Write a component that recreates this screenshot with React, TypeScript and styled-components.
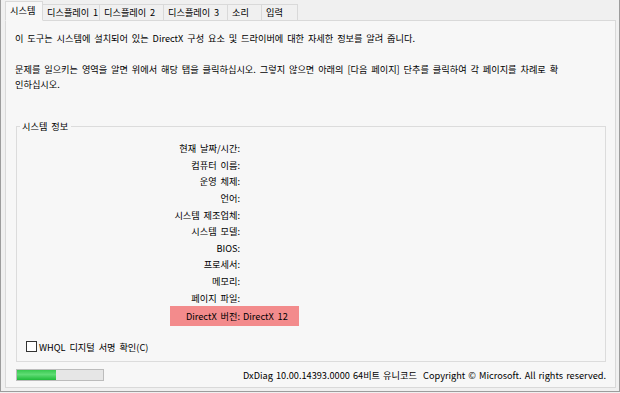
import React from 'react'
import styled, { createGlobalStyle, css } from 'styled-components'

const GlobalStyle = createGlobalStyle`
  html, body {
    margin: 0;
    padding: 0;
    background: #f0f0f0;
  }
  body {
    font-family: 'Noto Sans CJK KR', 'Noto Sans', sans-serif;
    font-size: 9.2px;
    word-spacing: 1.8px;
    color: #000;
    font-feature-settings: 'palt';
  }
`

const tabs = [
  { label: '시스템', width: 38 },
  { label: '디스플레이 1', width: 57 },
  { label: '디스플레이 2', width: 64 },
  { label: '디스플레이 3', width: 64 },
  { label: '소리', width: 34 },
  { label: '입력', width: 36 },
]

const rows = [
  '현재 날짜/시간:',
  '컴퓨터 이름:',
  '운영 체제:',
  '언어:',
  '시스템 제조업체:',
  '시스템 모델:',
  'BIOS:',
  '프로세서:',
  '메모리:',
  '페이지 파일:',
]

const App: React.FC = () => {
  return (
    <>
      <GlobalStyle />
      <Window>
        <TabStrip>
          {tabs.map((t, i) => (
            <Tab key={t.label} $active={i === 0} style={{ width: t.width }}>
              {t.label}
            </Tab>
          ))}
        </TabStrip>
        <Panel>
          <Intro>이 도구는 시스템에 설치되어 있는 DirectX 구성 요소 및 드라이버에 대한 자세한 정보를 알려 줍니다.</Intro>
          <Hint>
            문제를 일으키는 영역을 알면 위에서 해당 탭을 클릭하십시오. 그렇지 않으면 아래의 [다음 페이지] 단추를 클릭하여 각 페이지를 차례로 확
            <br />
            인하십시오.
          </Hint>
          <GroupBox>
            <Legend>시스템 정보</Legend>
            <InfoList>
              {rows.map(r => (
                <Row key={r}>
                  <Label>{r}</Label>
                  <Value />
                </Row>
              ))}
              <Row $highlight>
                <Label $highlight>DirectX 버전:</Label>
                <Value>DirectX 12</Value>
              </Row>
            </InfoList>
            <CheckRow>
              <CheckBox />
              <span>WHQL 디지털 서명 확인(C)</span>
            </CheckRow>
          </GroupBox>
          <Footer>
            <Progress>
              <ProgressFill style={{ width: '45%' }} />
            </Progress>
            <Version>DxDiag 10.00.14393.0000 64비트 유니코드&nbsp;&nbsp;Copyright © Microsoft. All rights reserved.</Version>
          </Footer>
        </Panel>
      </Window>
    </>
  )
}

const Window = styled.div`
  box-sizing: border-box;
  width: 620px;
  height: 392px;
  display: flex;
  flex-direction: column;
  padding: 2px 3px 3px 4px;
  border-left: 1px solid #9c9c9c;
  border-right: 1px solid #9c9c9c;
  border-bottom: 1px solid #9c9c9c;
  background: #f0f0f0;
`

const TabStrip = styled.div`
  display: flex;
  align-items: flex-end;
  height: 19px;
  margin-bottom: -1px;
  position: relative;
  z-index: 1;
`

const Tab = styled.div<{ $active?: boolean }>`
  box-sizing: border-box;
  height: 17px;
  padding: 0 0 0 4px;
  border: 1px solid #d9d9d9;
  border-left: none;
  background: #f0f0f0;
  line-height: 15px;
  white-space: nowrap;
  overflow: hidden;
  ${({ $active }) =>
    $active &&
    css`
      height: 20px;
      line-height: 17px;
      border-left: 1px solid #d9d9d9;
      border-bottom-color: #f7f7f7;
      background: #f7f7f7;
      padding-left: 4px;
    `}
`

const Panel = styled.div`
  flex: 1;
  display: flex;
  flex-direction: column;
  border: 1px solid #d9d9d9;
  background: #f7f7f7;
  padding: 0 9px 0 10px;
`

const Intro = styled.p`
  margin: 10px 0 0 -1px;
  line-height: 15px;
  white-space: nowrap;
`

const Hint = styled.p`
  margin: 16px 0 0 -1px;
  line-height: 15px;
  white-space: nowrap;
`

const GroupBox = styled.fieldset`
  margin: 27px 0 0 0;
  padding: 7px 0 7px 0;
  border: 1px solid #dcdcdc;
  min-width: 0;
`

const Legend = styled.legend`
  margin-left: 3px;
  padding: 0 3px 0 2px;
  line-height: 14px;
`

const InfoList = styled.div`
  display: flex;
  flex-direction: column;
`

const Row = styled.div<{ $highlight?: boolean }>`
  display: flex;
  align-items: center;
  height: 16.6px;
  ${({ $highlight }) =>
    $highlight &&
    css`
      height: 20px;
      width: 129px;
      margin: 0 0 0 153px;
      background: #f38b8c;
    `}
`

const Label = styled.span<{ $highlight?: boolean }>`
  width: ${({ $highlight }) => ($highlight ? '70px' : '223px')};
  text-align: right;
  white-space: nowrap;
`

const Value = styled.span`
  margin-left: 3px;
  white-space: nowrap;
`

const CheckRow = styled.label`
  display: flex;
  align-items: center;
  gap: 2px;
  margin: 14px 0 0 9px;
  line-height: 14px;
`

const CheckBox = styled.span`
  box-sizing: border-box;
  width: 11px;
  height: 11px;
  border: 1px solid #333;
  background: #fff;
`

const Footer = styled.div`
  display: flex;
  align-items: center;
  justify-content: space-between;
  margin: 6px 0 0 0;
`

const Progress = styled.div`
  box-sizing: border-box;
  width: 88px;
  height: 12px;
  border: 1px solid #bcbcbc;
  background: #e6e6e6;
`

const ProgressFill = styled.div`
  height: 100%;
  background: linear-gradient(to bottom, #37c94f 0%, #5fdc74 45%, #1fbb3a 100%);
`

const Version = styled.span`
  white-space: nowrap;
  word-spacing: 1px;
`

export default App
